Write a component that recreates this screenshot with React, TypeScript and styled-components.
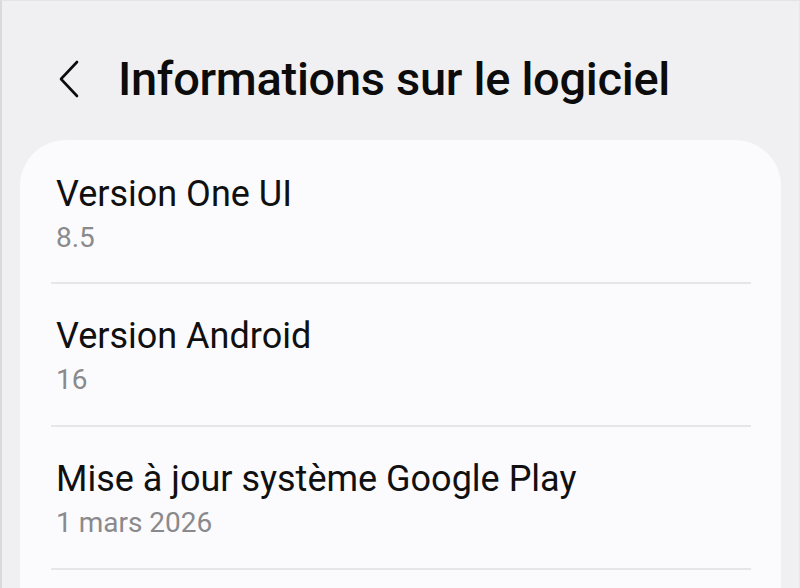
import styled, { createGlobalStyle } from "styled-components";

const GlobalStyle = createGlobalStyle`
  html, body {
    margin: 0;
    padding: 0;
    background: #f0f0f2;
  }
  body {
    font-family: Roboto, "Noto Sans", "Liberation Sans", sans-serif;
  }
`;

const Screen = styled.div`
  width: 800px;
  height: 588px;
  box-sizing: border-box;
  overflow: hidden;
  background: #f0f0f2;
  border-left: 2px solid #dadadc;
  border-top: 1px solid #e4e4e6;
  border-right: 1px solid #e8e8ea;
`;

const Header = styled.header`
  display: flex;
  align-items: center;
  height: 139px;
  padding: 16px 0 0 54px;
  box-sizing: border-box;
  gap: 36px;
`;

const BackButton = styled.button`
  display: flex;
  align-items: center;
  justify-content: center;
  border: none;
  background: none;
  padding: 0;
  width: 26px;
  height: 40px;
  color: #0c0c0c;
`;

const Title = styled.h1`
  margin: 0;
  font-size: 47px;
  font-weight: 500;
  color: #0c0c0c;
  letter-spacing: -0.3px;
`;

const Card = styled.section`
  margin: 0 18px 0 18px;
  background: #fbfbfd;
  border-radius: 46px 46px 0 0;
  padding: 0 30px 0 31px;
  min-height: 460px;
`;

const Row = styled.div<{ $first?: boolean }>`
  display: flex;
  flex-direction: column;
  gap: 5px;
  padding: ${(p) => (p.$first ? "32px" : "30px")} 0 0 5px;
  border-bottom: 2px solid #e6e6ea;
  height: ${(p) => (p.$first ? "144px" : "143px")};
  box-sizing: border-box;
`;

const Label = styled.div`
  font-size: 36px;
  color: #101010;
  line-height: 44px;
`;

const Value = styled.div`
  font-size: 28px;
  color: #8a8a8c;
  line-height: 34px;
`;

const items = [
  { label: "Version One UI", value: "8.5" },
  { label: "Version Android", value: "16" },
  { label: "Mise à jour système Google Play", value: "1 mars 2026" },
];

export default function App() {
  return (
    <Screen>
      <GlobalStyle />
      <Header>
        <BackButton aria-label="Retour">
          <svg width="22" height="38" viewBox="0 0 22 38" fill="none">
            <path
              d="M19 2 L3 19 L19 36"
              stroke="currentColor"
              strokeWidth="2.6"
              strokeLinecap="round"
              strokeLinejoin="round"
            />
          </svg>
        </BackButton>
        <Title>Informations sur le logiciel</Title>
      </Header>
      <Card>
        {items.map((it, i) => (
          <Row key={it.label} $first={i === 0}>
            <Label>{it.label}</Label>
            <Value>{it.value}</Value>
          </Row>
        ))}
      </Card>
    </Screen>
  );
}
